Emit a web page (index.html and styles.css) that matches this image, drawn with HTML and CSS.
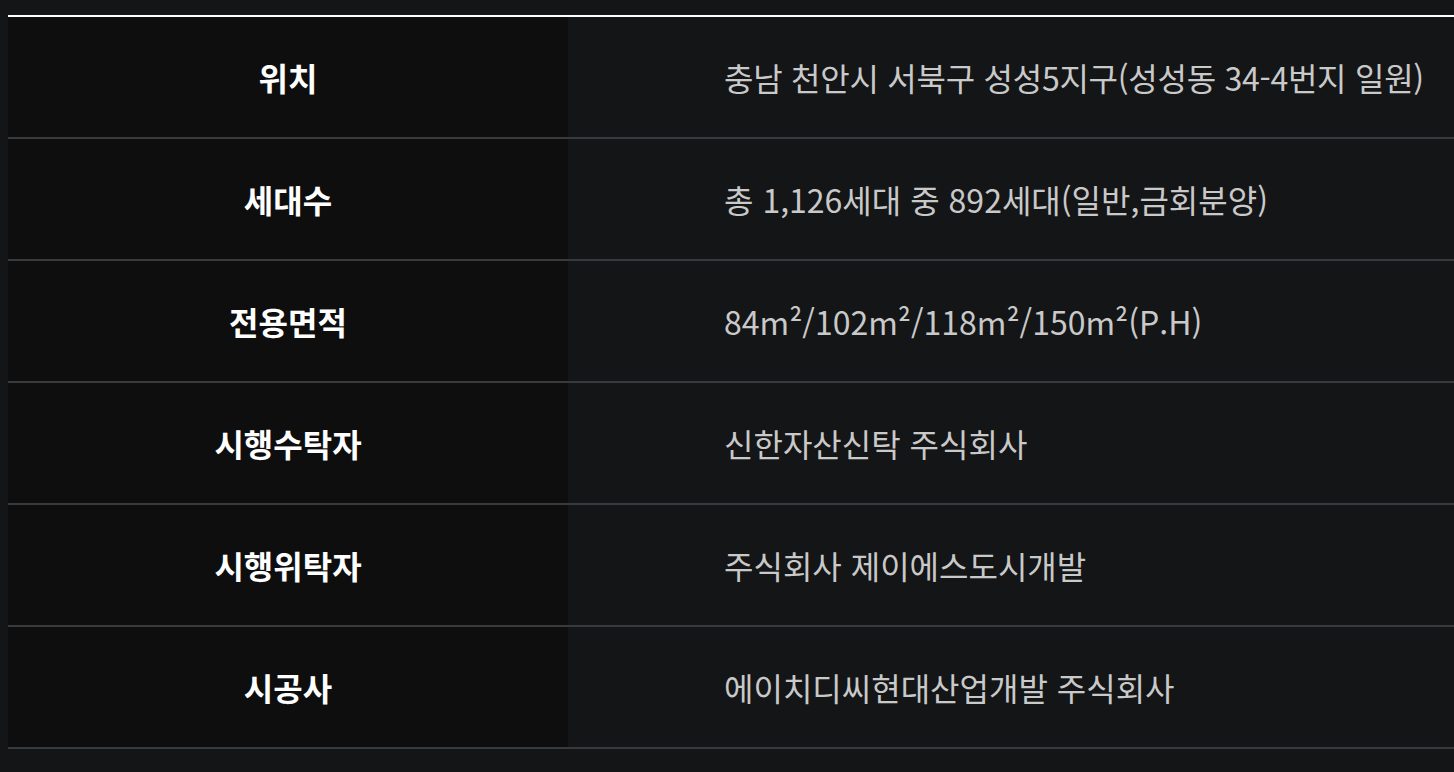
FILE: index.html
```html
<!DOCTYPE html>
<html lang="ko">
<head>
<meta charset="utf-8">
<link rel="stylesheet" href="styles.css">
</head>
<body>
<div class="spec">
  <div class="row"><div class="label">위치</div><div class="value value-tight">충남 천안시 서북구 성성5지구(성성동 34-4번지 일원)</div></div>
  <div class="row"><div class="label">세대수</div><div class="value">총 1,126세대 중 892세대(일반,금회분양)</div></div>
  <div class="row"><div class="label">전용면적</div><div class="value">84m²/102m²/118m²/150m²(P.H)</div></div>
  <div class="row"><div class="label">시행수탁자</div><div class="value">신한자산신탁 주식회사</div></div>
  <div class="row"><div class="label">시행위탁자</div><div class="value">주식회사 제이에스도시개발</div></div>
  <div class="row"><div class="label">시공사</div><div class="value">에이치디씨현대산업개발 주식회사</div></div>
</div>
</body>
</html>
```

FILE: styles.css
```css
html, body {
  background: #141517;
}
body {
  margin: 15px 0 0 8px;
  overflow: hidden;
  font-family: "Noto Sans CJK KR", "Noto Sans", sans-serif;
}
.spec {
  border-top: 2px solid #ffffff;
}
.row {
  display: flex;
  height: 120px;
  border-bottom: 2px solid #383b3e;
}
.label {
  width: 560px;
  flex: none;
  background: #0e0e0e;
  color: #ffffff;
  font-weight: 700;
  font-size: 32px;
  display: flex;
  align-items: center;
  justify-content: center;
}
.value {
  flex: 1;
  color: #c9c9c9;
  font-size: 32px;
  display: flex;
  align-items: center;
  padding-left: 156px;
  white-space: nowrap;
}
.value-tight {
  letter-spacing: -0.26px;
}
```
